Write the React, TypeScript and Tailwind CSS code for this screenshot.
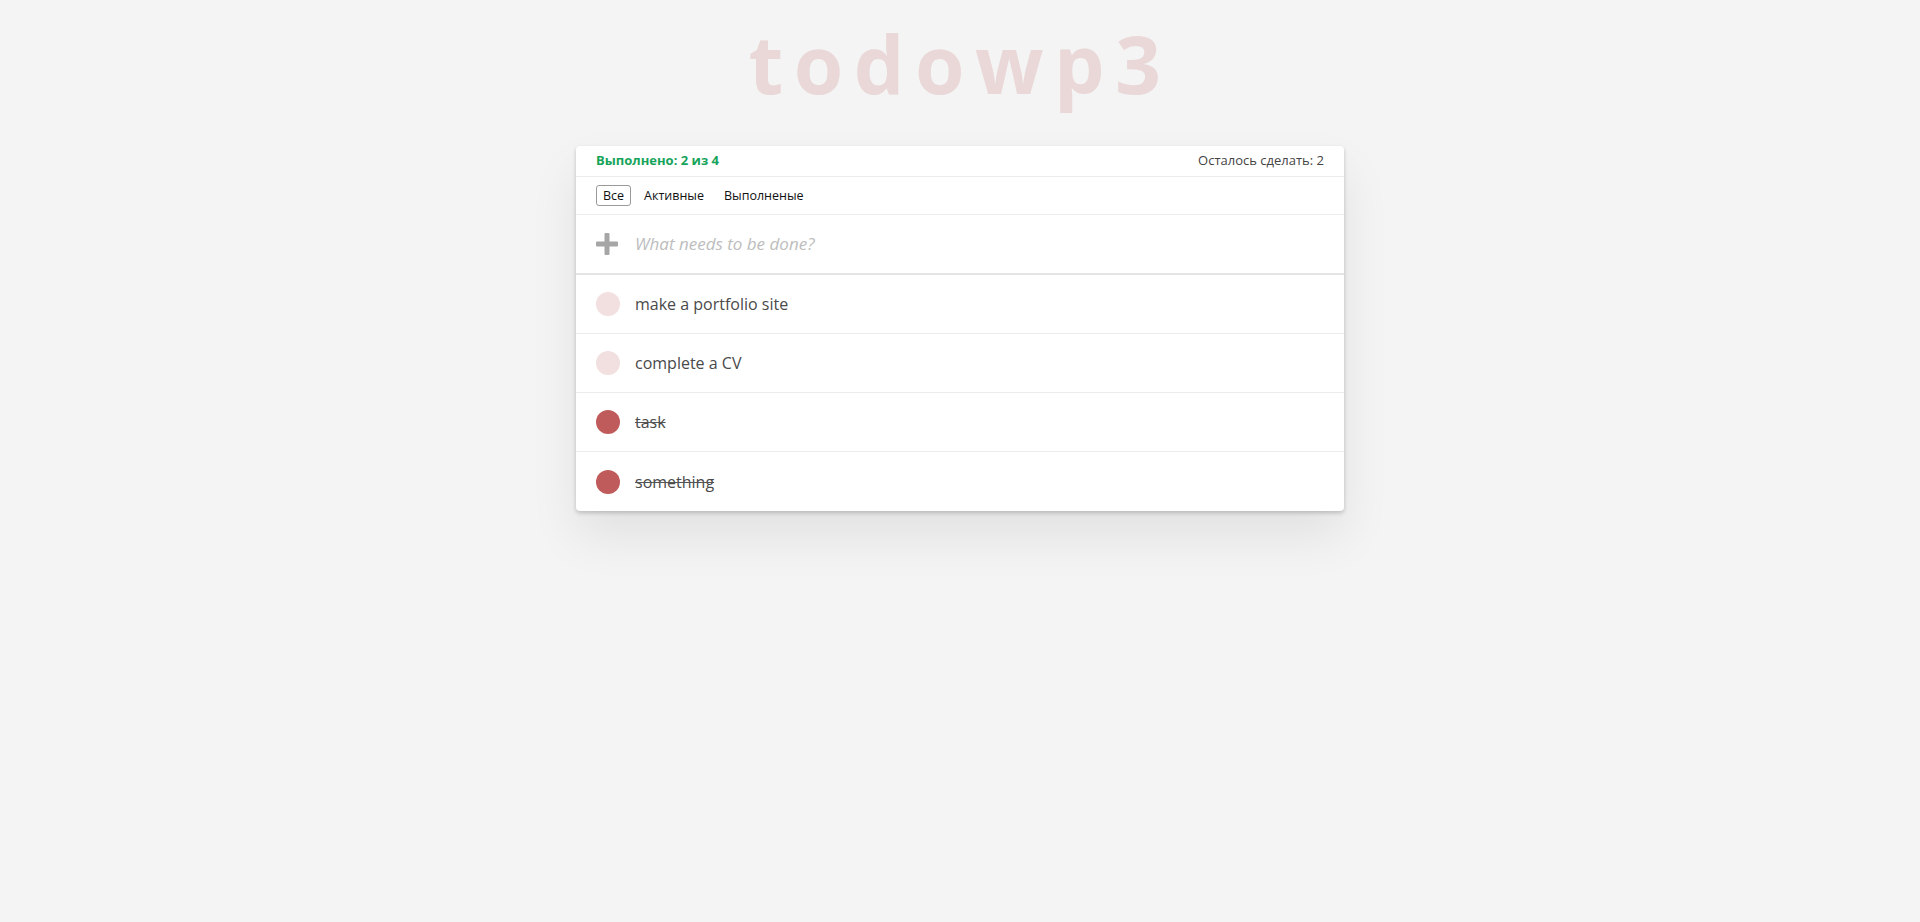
import React, { useState } from 'react';

interface Todo {
    id: number;
    title: string;
    done: boolean;
}

const initialTodos: Todo[] = [
    { id: 1, title: 'make a portfolio site', done: false },
    { id: 2, title: 'complete a CV', done: false },
    { id: 3, title: 'task', done: true },
    { id: 4, title: 'something', done: true },
];

const filters = ['Все', 'Активные', 'Выполненые'];

const App: React.FC = () => {
    const [todos, setTodos] = useState<Todo[]>(initialTodos);
    const [filter, setFilter] = useState(0);
    const [text, setText] = useState('');

    const doneCount = todos.filter(t => t.done).length;
    const visible = todos.filter(t => (filter === 1 ? !t.done : filter === 2 ? t.done : true));

    const toggle = (id: number) => {
        setTodos(prev => prev.map(t => (t.id === id ? { ...t, done: !t.done } : t)));
    };

    return (
        <div className="min-h-[922px] w-full bg-[#f4f4f4] font-['Open_Sans',sans-serif] flex flex-col items-center">
            {/* Title */}
            <h1 className="mt-[3px] h-[143px] text-[80px] font-bold leading-[120px] tracking-[10.5px] text-[#ead7d7] select-none">
                todowp3
            </h1>

            {/* Card */}
            <div className="w-[768px] bg-white rounded-[4px] shadow-[0_2px_4px_rgba(0,0,0,0.2),0_25px_50px_rgba(0,0,0,0.08)]">
                {/* Stats */}
                <div className="h-[31px] px-[20px] flex items-center justify-between border-b border-[#ececec] text-[13px]">
                    <span className="font-bold text-[#16a35a]">Выполнено: {doneCount} из {todos.length}</span>
                    <span className="text-[#444]">Осталось сделать: {todos.length - doneCount}</span>
                </div>

                {/* Filters */}
                <div className="h-[38px] px-[20px] flex items-center gap-[6px] border-b border-[#ececec]">
                    {filters.map((f, i) => (
                        <button
                            key={f}
                            onClick={() => setFilter(i)}
                            className={`h-[21px] px-[6px] rounded-[3px] border text-[12.5px] leading-[19px] text-[#111] ${filter === i ? 'border-[#9a9a9a]' : 'border-transparent'}`}
                        >
                            {f}
                        </button>
                    ))}
                </div>

                {/* New todo */}
                <div className="h-[60px] px-[20px] flex items-center gap-[17px] border-b-2 border-[#e4e4e4]">
                    <svg width="22" height="22" viewBox="0 0 22 22" className="shrink-0">
                        <rect x="8.5" y="0" width="5" height="22" rx="1" fill="#a6a6a6" />
                        <rect x="0" y="8.5" width="22" height="5" rx="1" fill="#a6a6a6" />
                    </svg>
                    <input
                        value={text}
                        onChange={e => setText(e.target.value)}
                        placeholder="What needs to be done?"
                        className="flex-1 outline-none text-[17px] italic text-[#4d4d4d] placeholder:text-[#bdbdbd] placeholder:italic bg-transparent"
                    />
                </div>

                {/* List */}
                <ul>
                    {visible.map((t, i) => (
                        <li
                            key={t.id}
                            className={`h-[59px] px-[20px] flex items-center gap-[15px] ${i < visible.length - 1 ? 'border-b border-[#ececec]' : ''}`}
                        >
                            <button
                                onClick={() => toggle(t.id)}
                                className={`w-[24px] h-[24px] rounded-full shrink-0 ${t.done ? 'bg-[#c05b5b]' : 'bg-[#f2dfdf]'}`}
                            />
                            <span className={`text-[16px] text-[#4a4a4a] ${t.done ? 'line-through decoration-[#555]' : ''}`}>
                                {t.title}
                            </span>
                        </li>
                    ))}
                </ul>
            </div>
        </div>
    );
};

export default App;
